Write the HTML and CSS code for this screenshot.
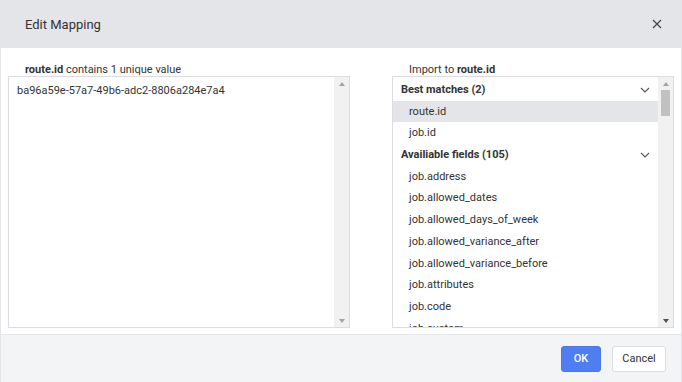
FILE: index.html
```html
<!DOCTYPE html>
<html lang="en">
<head>
  <meta charset="UTF-8" />
  <title>Edit Mapping</title>
  <link rel="stylesheet" href="styles.css">
</head>
<body>

  <div class="modal">
    <div class="modal-header">
      <span class="modal-title">Edit Mapping</span>
      <button class="close-btn" aria-label="Close">
        <svg width="10" height="10" viewBox="0 0 10 10"><path d="M1 1L9 9M9 1L1 9" stroke="#444" stroke-width="1.2"/></svg>
      </button>
    </div>

    <div class="modal-body">
      <!-- values column -->
      <div class="column left">
        <div class="col-label"><b>route.id</b> contains 1 unique value</div>
        <div class="box">
          <div class="box-content">
            <div class="value">ba96a59e-57a7-49b6-adc2-8806a284e7a4</div>
          </div>
          <div class="scrollbar">
            <span class="arrow up off"></span>
            <span class="track"></span>
            <span class="arrow down off"></span>
          </div>
        </div>
      </div>

      <!-- field picker -->
      <div class="column right">
        <div class="col-label">Import to <b>route.id</b></div>
        <div class="box">
          <div class="box-content fields">
            <div class="group">Best matches (2)
              <svg width="10" height="6" viewBox="0 0 10 6"><path d="M1 1l4 4 4-4" fill="none" stroke="#555" stroke-width="1.1"/></svg>
            </div>
            <div class="item selected">route.id</div>
            <div class="item">job.id</div>
            <div class="group">Availiable fields (105)
              <svg width="10" height="6" viewBox="0 0 10 6"><path d="M1 1l4 4 4-4" fill="none" stroke="#555" stroke-width="1.1"/></svg>
            </div>
            <div class="item">job.address</div>
            <div class="item">job.allowed_dates</div>
            <div class="item">job.allowed_days_of_week</div>
            <div class="item">job.allowed_variance_after</div>
            <div class="item">job.allowed_variance_before</div>
            <div class="item">job.attributes</div>
            <div class="item">job.code</div>
            <div class="item">job.custom</div>
          </div>
          <div class="scrollbar">
            <span class="arrow up off"></span>
            <span class="track"><span class="thumb"></span></span>
            <span class="arrow down"></span>
          </div>
        </div>
      </div>
    </div>

    <div class="modal-footer">
      <button class="btn btn-primary">OK</button>
      <button class="btn btn-cancel">Cancel</button>
    </div>
  </div>

</body>
</html>
```

FILE: styles.css
```css
* {
  box-sizing: border-box;
}

body {
  margin: 0;
  font-family: Roboto, "Liberation Sans", sans-serif;
  color: #333;
  background: #fff;
}

.modal {
  width: 682px;
  height: 382px;
  display: flex;
  flex-direction: column;
  border-left: 1px solid #e4e5e8;
  border-right: 1px solid #e4e5e8;
}

.modal-header {
  height: 48px;
  flex-shrink: 0;
  background: #e4e5e8;
  display: flex;
  align-items: center;
  justify-content: space-between;
  padding: 0 17px 0 24px;
}

.modal-title {
  font-size: 13px;
  color: #333;
}

.close-btn {
  background: none;
  border: none;
  padding: 0;
  width: 14px;
  height: 14px;
  display: flex;
  align-items: center;
  justify-content: center;
  cursor: pointer;
}

.modal-body {
  flex: 1;
  display: grid;
  grid-template-columns: 342px 282px;
  column-gap: 42px;
  padding: 15px 0 0 7px;
}

.col-label {
  font-size: 11px;
  color: #333;
  height: 13px;
  line-height: 13px;
  padding-left: 17px;
}

.box {
  height: 252px;
  border: 1px solid #dcdde0;
  background: #fff;
  display: flex;
}

.box-content {
  flex: 1;
  overflow: hidden;
}

/* fake classic scrollbar */
.scrollbar {
  width: 15px;
  flex-shrink: 0;
  background: #f1f1f1;
  display: flex;
  flex-direction: column;
}

.track {
  flex: 1;
  padding: 0 3px;
}

.thumb {
  display: block;
  height: 26px;
  background: #c1c1c1;
}

.arrow {
  height: 13px;
  display: flex;
  align-items: center;
  justify-content: center;
}

.arrow::before {
  content: "";
  border-left: 3.5px solid transparent;
  border-right: 3.5px solid transparent;
}

.arrow.up::before {
  border-bottom: 4px solid #505050;
}

.arrow.down::before {
  border-top: 4px solid #505050;
}

.arrow.off.up::before {
  border-bottom-color: #a3a3a3;
}

.arrow.off.down::before {
  border-top-color: #a3a3a3;
}

.value {
  font-size: 11px;
  padding: 7px 8px;
  color: #333;
}

.fields {
  padding-top: 2px;
}

.group {
  font-size: 11px;
  font-weight: bold;
  height: 21.7px;
  line-height: 21.7px;
  padding: 0 8px 0 8px;
  display: flex;
  align-items: center;
  justify-content: space-between;
}

.item {
  font-size: 11px;
  height: 21.7px;
  line-height: 21.7px;
  padding-left: 16px;
}

.item.selected {
  background: #e4e5e8;
}

.modal-footer {
  height: 48px;
  flex-shrink: 0;
  background: #f3f4f6;
  border-top: 1px solid #e4e5e8;
  display: flex;
  justify-content: flex-end;
  align-items: center;
  gap: 11px;
  padding-right: 15px;
}

.btn {
  font-family: Roboto, "Liberation Sans", sans-serif;
  font-size: 11px;
  height: 26px;
  padding: 0;
  border: 1px solid #dcdde0;
  border-radius: 3px;
  background: #fff;
  color: #333;
  cursor: pointer;
}

.btn-cancel {
  width: 54px;
}

.btn-primary {
  background: #4f7ef2;
  border-color: #4a78ea;
  color: #fff;
  font-weight: 500;
  width: 40px;
}
```
